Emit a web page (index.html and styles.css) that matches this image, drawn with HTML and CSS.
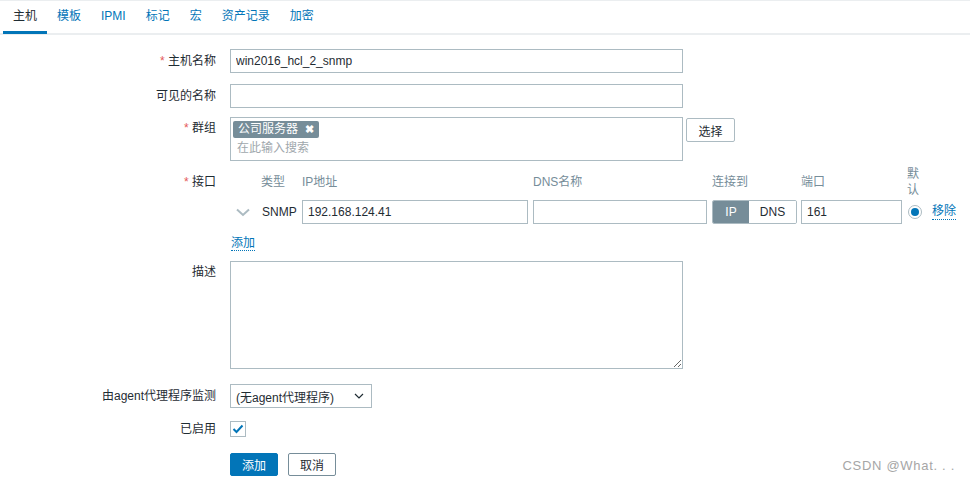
FILE: index.html
```html
<!DOCTYPE html>
<html lang="zh">
<head>
<meta charset="utf-8">
<link rel="stylesheet" href="styles.css">
</head>
<body>
<div class="page">
  <ul class="tabs">
    <li class="tab active">主机</li>
    <li class="tab">模板</li>
    <li class="tab">IPMI</li>
    <li class="tab">标记</li>
    <li class="tab">宏</li>
    <li class="tab">资产记录</li>
    <li class="tab">加密</li>
  </ul>

  <div class="form">
    <div class="row">
      <div class="label"><span class="req">*</span> 主机名称</div>
      <div class="field"><input class="text wide" type="text" value="win2016_hcl_2_snmp"></div>
    </div>

    <div class="row row-tight">
      <div class="label">可见的名称</div>
      <div class="field"><input class="text wide" type="text" value=""></div>
    </div>

    <div class="row">
      <div class="label top"><span class="req">*</span> 群组</div>
      <div class="field group-field">
        <div class="multiselect">
          <div class="tags"><span class="tag">公司服务器 <span class="tag-x">✖</span></span></div>
          <div class="placeholder">在此输入搜索</div>
        </div>
        <button class="btn-grey" type="button">选择</button>
      </div>
    </div>

    <div class="row">
      <div class="label iface-label"><span class="req">*</span> 接口</div>
      <div class="field">
        <div class="iface">
          <div class="ih"></div>
          <div class="ih type-h">类型</div>
          <div class="ih">IP地址</div>
          <div class="ih">DNS名称</div>
          <div class="ih">连接到</div>
          <div class="ih">端口</div>
          <div class="ih def-h">默认</div>
          <div class="ih"></div>

          <div class="ic chev">
            <svg width="14" height="9" viewBox="0 0 14 9"><path d="M1 1.5 L7 7 L13 1.5" fill="none" stroke="#acbbc2" stroke-width="2"/></svg>
          </div>
          <div class="ic type">SNMP</div>
          <div class="ic"><input class="text ip" type="text" value="192.168.124.41"></div>
          <div class="ic"><input class="text dns" type="text" value=""></div>
          <div class="ic">
            <div class="toggle"><span class="seg on">IP</span><span class="seg">DNS</span></div>
          </div>
          <div class="ic"><input class="text port" type="text" value="161"></div>
          <div class="ic"><span class="radio"><span class="radio-dot"></span></span></div>
          <div class="ic"><a class="link">移除</a></div>
        </div>
        <div class="add-row"><a class="link">添加</a></div>
      </div>
    </div>

    <div class="row row-area">
      <div class="label top">描述</div>
      <div class="field"><textarea class="area"></textarea></div>
    </div>

    <div class="row">
      <div class="label">由agent代理程序监测</div>
      <div class="field">
        <div class="select">
          <span>(无agent代理程序)</span>
          <svg width="10" height="6" viewBox="0 0 10 6"><path d="M1 1 L5 5 L9 1" fill="none" stroke="#1f2c33" stroke-width="1.2"/></svg>
        </div>
      </div>
    </div>

    <div class="row">
      <div class="label cb-label">已启用</div>
      <div class="field">
        <span class="checkbox">
          <svg width="12" height="10" viewBox="0 0 12 10"><path d="M1.5 5 L4.5 8 L10.5 1.5" fill="none" stroke="#0275b8" stroke-width="2"/></svg>
        </span>
      </div>
    </div>

    <div class="row buttons">
      <div class="label"></div>
      <div class="field btns">
        <button class="btn-main" type="button">添加</button>
        <button class="btn-alt" type="button">取消</button>
      </div>
    </div>
  </div>

  <div class="watermark">CSDN @What. . .</div>
</div>
</body>
</html>
```

FILE: styles.css
```css
* { box-sizing: border-box; }
html, body { margin: 0; padding: 0; background: #fff; }
body {
  font-family: "Liberation Sans", Arial, "Noto Sans CJK SC", sans-serif;
  font-size: 12px;
  color: #1f2c33;
  width: 970px;
  height: 481px;
  overflow: hidden;
}
.page {
  position: relative;
  height: 481px;
  border-top: 1px solid #ebeef0;
}
.tabs {
  list-style: none;
  margin: 0;
  padding: 0 0 0 3px;
  display: flex;
  height: 34px;
  border-bottom: 2px solid #ebeef0;
}
.tab {
  padding: 0 10px;
  line-height: 31px;
  height: 33px;
  color: #0275b8;
  border-bottom: 3px solid transparent;
}
.tab.active {
  color: #1f2c33;
  border-bottom-color: #0275b8;
}
.form { padding-top: 14px; }
.row {
  display: flex;
  align-items: flex-start;
  margin-bottom: 11px;
}
.row-tight { margin-bottom: 9px; }
.row-area { margin-bottom: 15px; }
.label {
  width: 216px;
  flex: none;
  text-align: right;
  line-height: 24px;
  margin-right: 14px;
  white-space: nowrap;
}
.label.top { line-height: 14px; padding-top: 4px; }
.label.cb-label { line-height: 20px; }
.req { color: #e45959; }
.field { flex: none; }
input.text {
  font: inherit;
  color: #1f2c33;
  height: 24px;
  border: 1px solid #acbbc2;
  padding: 0 5px;
  background: #fff;
  outline: none;
  display: block;
}
.wide { width: 453px; }
.group-field { display: flex; align-items: flex-start; gap: 3px; }
.multiselect {
  width: 453px;
  height: 44px;
  border: 1px solid #acbbc2;
  padding: 3px 2px 0;
}
.tag {
  display: inline-block;
  background: #768d99;
  color: #fff;
  height: 17px;
  line-height: 17px;
  padding: 0 5px 0 5px;
  border-radius: 2px;
}
.tag-x { font-size: 11px; font-weight: bold; margin-left: 4px; }
.placeholder { color: #9fa8ad; margin-top: 3px; padding-left: 4px; line-height: 15px; }
.btn-grey {
  font: inherit;
  color: #1f2c33;
  background: #fff;
  border: 1px solid #acbbc2;
  border-radius: 2px;
  height: 24px;
  width: 49px;
  margin-top: 1px;
  padding: 0;
}
.iface-label { line-height: 14px; padding-top: 3px; }
.iface {
  display: grid;
  grid-template-columns: 28px 44px 231px 179px 89px 106px 25px auto;
  grid-template-rows: 32px 24px;
  row-gap: 2px;
  margin-top: -6px;
}
.ih {
  color: #768d99;
  display: flex;
  align-items: center;
  line-height: 16px;
}
.type-h { padding-left: 3px; }
.def-h { width: 14px; }
.ic { display: flex; align-items: center; }
.chev { padding-left: 6px; }
.type { padding-left: 4px; }
.ip { width: 226px; }
.dns { width: 174px; }
.port { width: 101px; }
.toggle {
  display: flex;
  height: 24px;
  border: 1px solid #acbbc2;
  border-radius: 2px;
  overflow: hidden;
  width: 85px;
}
.seg {
  display: flex;
  align-items: center;
  justify-content: center;
  width: 47px;
  background: #fff;
}
.seg.on {
  width: 36px;
  background: #768d99;
  color: #fff;
}
.radio {
  width: 14px;
  height: 14px;
  border: 1px solid #acbbc2;
  border-radius: 50%;
  display: flex;
  align-items: center;
  justify-content: center;
  margin-left: 1px;
}
.radio-dot { width: 8px; height: 8px; border-radius: 50%; background: #0275b8; }
.link {
  color: #0275b8;
  text-decoration: none;
  border-bottom: 1px dotted #0275b8;
  line-height: 15px;
  cursor: pointer;
}
.add-row { padding-top: 12px; padding-left: 1px; height: 26px; }
.area {
  display: block;
  width: 453px;
  height: 108px;
  border: 1px solid #acbbc2;
  font: inherit;
  resize: both;
  outline: none;
}
.select {
  width: 142px;
  height: 24px;
  border: 1px solid #acbbc2;
  display: flex;
  align-items: center;
  justify-content: space-between;
  padding: 0 7px 0 5px;
}
.checkbox {
  display: flex;
  align-items: center;
  justify-content: center;
  width: 16px;
  height: 16px;
  border: 1px solid #acbbc2;
  margin-top: 2px;
}
.btns { display: flex; gap: 10px; margin-top: 3px; }
.btn-main, .btn-alt {
  font: inherit;
  height: 23px;
  width: 48px;
  border-radius: 2px;
  padding: 0;
}
.btn-main { background: #0275b8; color: #fff; border: 1px solid #0275b8; }
.btn-alt { background: #fff; color: #1f2c33; border: 1px solid #768d99; }
.watermark {
  position: absolute;
  right: 15px;
  bottom: 8px;
  font-size: 13px;
  color: #a6a6a6;
  letter-spacing: 0.7px;
}
```
